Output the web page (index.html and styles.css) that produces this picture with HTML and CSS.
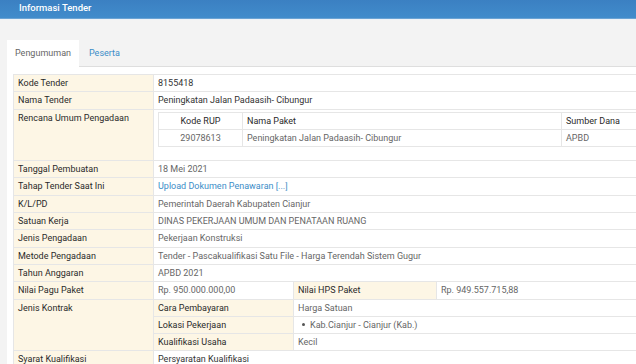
FILE: index.html
```html
<!DOCTYPE html>
<html>
<head>
<meta charset="utf-8">
<link rel="stylesheet" href="styles.css">
</head>
<body>
<div class="header">Informasi Tender</div>
<div class="panel">
  <div class="tabs">
    <div class="tab active">Pengumuman</div>
    <div class="tab link">Peserta</div>
  </div>
  <div class="content">
    <table class="info">
      <colgroup><col class="c1"><col class="c2"><col class="c3"><col class="c4"></colgroup>
      <tr><th>Kode Tender</th><td colspan="3" class="strong">8155418</td></tr>
      <tr><th>Nama Tender</th><td colspan="3" class="strong">Peningkatan Jalan Padaasih- Cibungur</td></tr>
      <tr><th>Rencana Umum Pengadaan</th><td colspan="3" class="nest">
        <table class="rup">
          <colgroup><col class="r1"><col class="r2"><col class="r3"></colgroup>
          <tr><th class="center">Kode RUP</th><th>Nama Paket</th><th>Sumber Dana</th></tr>
          <tr><td class="center">29078613</td><td>Peningkatan Jalan Padaasih- Cibungur</td><td>APBD</td></tr>
        </table>
      </td></tr>
      <tr><th>Tanggal Pembuatan</th><td colspan="3">18 Mei 2021</td></tr>
      <tr><th>Tahap Tender Saat Ini</th><td colspan="3"><span class="a">Upload Dokumen Penawaran [...]</span></td></tr>
      <tr><th>K/L/PD</th><td colspan="3">Pemerintah Daerah Kabupaten Cianjur</td></tr>
      <tr><th>Satuan Kerja</th><td colspan="3">DINAS PEKERJAAN UMUM DAN PENATAAN RUANG</td></tr>
      <tr><th>Jenis Pengadaan</th><td colspan="3">Pekerjaan Konstruksi</td></tr>
      <tr><th>Metode Pengadaan</th><td colspan="3">Tender - Pascakualifikasi Satu File - Harga Terendah Sistem Gugur</td></tr>
      <tr><th>Tahun Anggaran</th><td colspan="3">APBD 2021</td></tr>
      <tr><th>Nilai Pagu Paket</th><td>Rp. 950.000.000,00</td><th>Nilai HPS Paket</th><td>Rp. 949.557.715,88</td></tr>
      <tr><th rowspan="3">Jenis Kontrak</th><th>Cara Pembayaran</th><td colspan="2">Harga Satuan</td></tr>
      <tr><th>Lokasi Pekerjaan</th><td colspan="2"><span class="bullet"></span>Kab.Cianjur - Cianjur (Kab.)</td></tr>
      <tr><th>Kualifikasi Usaha</th><td colspan="2">Kecil</td></tr>
      <tr><th>Syarat Kualifikasi</th><td colspan="3" class="strong">Persyaratan Kualifikasi</td></tr>
    </table>
  </div>
</div>
</body>
</html>
```
FILE: styles.css
```css
html, body {
  margin: 0;
  padding: 0;
  overflow: hidden;
  background: #f3f3f3;
  font-family: Roboto, "Liberation Sans", sans-serif;
  font-size: 9px;
  color: #555;
}
.header {
  height: 18px;
  line-height: 16px;
  background: linear-gradient(#3b80c2, #418ccb);
  color: #fff;
  font-weight: 500;
  padding-left: 19px;
  border-bottom: 1px solid #6aa3d4;
  box-shadow: 0 1px 0 #eef2f6;
  font-size: 9.5px;
}
.panel {
  padding: 21px 0 0 7px;
}
.tabs {
  display: flex;
  height: 26px;
  border-bottom: 1px solid #dedede;
}
.tab {
  line-height: 26px;
  padding: 0 8px;
}
.tab.active {
  background: #fff;
  color: #666;
  margin-bottom: -1px;
  height: 27px;
}
.tab.link {
  color: #3c8dc8;
  padding: 0 10px;
}
.content {
  background: #fff;
  padding: 7px 0 0 6px;
  height: 400px;
}
table {
  border-collapse: collapse;
  table-layout: fixed;
}
.info {
  width: 700px;
}
.c1 { width: 140px; }
.c2 { width: 140px; }
.c3 { width: 143px; }
.info th, .info td {
  border: 1px solid #e6e6e6;
  padding: 3px 4px;
  line-height: 10.3px;
  text-align: left;
  vertical-align: top;
  white-space: nowrap;
}
.info th {
  background: #fdf6e5;
  color: #2a2a2a;
  font-weight: 400;
}
.info td {
  color: #666;
}
.info td.strong {
  color: #333;
}
.info td.nest {
  padding: 2px 4px 13px;
}
.rup {
  width: 552px;
}
.r1 { width: 84px; }
.r2 { width: 319px; }
.rup th, .rup td {
  border: 1px solid #e6e6e6;
  padding: 3px 4px;
  line-height: 10.3px;
  text-align: left;
  white-space: nowrap;
}
.rup th {
  background: #fff;
  color: #2a2a2a;
  font-weight: 400;
}
.rup td {
  color: #666;
}
.rup .center {
  text-align: center;
}
.a {
  color: #3c8dc8;
}
.bullet {
  display: inline-block;
  width: 3px;
  height: 3px;
  border-radius: 50%;
  background: #555;
  margin: 0 5px 1px 4px;
  vertical-align: middle;
}
```
